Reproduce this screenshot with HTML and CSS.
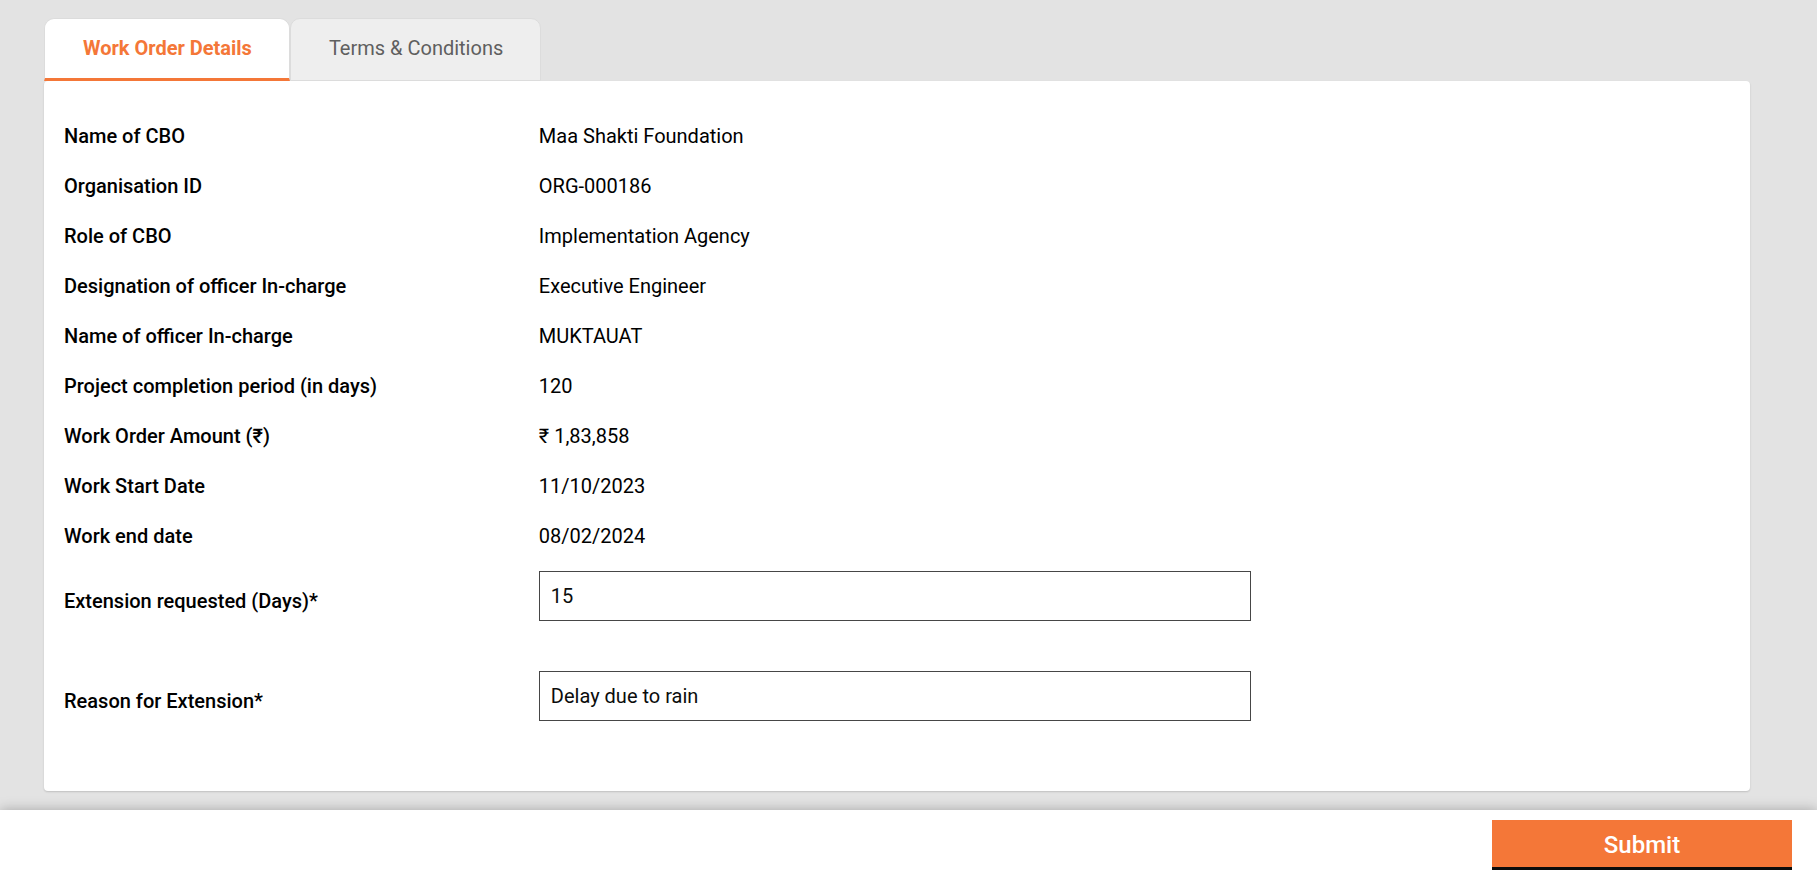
FILE: index.html
```html
<!DOCTYPE html>
<html lang="en">
<head>
<meta charset="utf-8">
<title>Work Order</title>
<link rel="stylesheet" href="styles.css">
</head>
<body>
<form class="page">
  <main class="content">
    <div class="tabs" role="tablist">
      <button type="button" class="tab tab-active" role="tab" aria-selected="true">Work Order Details</button>
      <button type="button" class="tab" role="tab" aria-selected="false">Terms &amp; Conditions</button>
    </div>
    <section class="card">
      <dl class="details">
        <div class="row"><dt>Name of CBO</dt><dd>Maa Shakti Foundation</dd></div>
        <div class="row"><dt>Organisation ID</dt><dd>ORG-000186</dd></div>
        <div class="row"><dt>Role of CBO</dt><dd>Implementation Agency</dd></div>
        <div class="row"><dt>Designation of officer In-charge</dt><dd>Executive Engineer</dd></div>
        <div class="row"><dt>Name of officer In-charge</dt><dd>MUKTAUAT</dd></div>
        <div class="row"><dt>Project completion period (in days)</dt><dd>120</dd></div>
        <div class="row"><dt>Work Order Amount (₹)</dt><dd>₹ 1,83,858</dd></div>
        <div class="row"><dt>Work Start Date</dt><dd>11/10/2023</dd></div>
        <div class="row"><dt>Work end date</dt><dd>08/02/2024</dd></div>
      </dl>
      <div class="field">
        <label for="days">Extension requested (Days)*</label>
        <input id="days" type="text" value="15">
      </div>
      <div class="field">
        <label for="reason">Reason for Extension*</label>
        <input id="reason" type="text" value="Delay due to rain">
      </div>
    </section>
  </main>
  <footer class="action-bar">
    <button type="submit" class="submit">Submit</button>
  </footer>
</form>
</body>
</html>
```
FILE: styles.css
```css
* {
  box-sizing: border-box;
}

body {
  margin: 0;
  background: #e3e3e3;
  color: #000;
  font-family: Roboto, "Noto Sans", sans-serif;
  font-size: 20px;
  line-height: 24px;
}

button,
input {
  font: inherit;
  border-radius: 0;
}

.page {
  display: flex;
  flex-direction: column;
  min-height: 100vh;
}

.content {
  padding: 18px 67px 19px 44px;
}

.tabs {
  display: flex;
}

.tab {
  height: 63px;
  padding: 0 37px 4px 38px;
  border: 1px solid #dcdcdc;
  border-radius: 10px 10px 0 0;
  background: #eee;
  color: #5f5f5f;
}

.tab-active {
  padding-bottom: 2px;
  border-bottom: 3px solid #f47738;
  background: #fff;
  color: #f47738;
  font-weight: 700;
}

.card {
  padding: 30px 24px 20px 20px;
  border-radius: 4px;
  background: #fff;
  box-shadow: 0 1px 2px rgba(0, 0, 0, 0.16);
}

.details {
  margin: 0 0 10px;
}

.row,
.field {
  display: grid;
  grid-template-columns: 2fr 3fr 2fr;
  align-items: start;
}

.row {
  line-height: 50px;
}

dt,
label {
  font-weight: 500;
}

dd {
  margin: 0;
}

.field {
  min-height: 100px;
}

label {
  line-height: 60px;
}

input {
  width: 100%;
  height: 50px;
  padding: 0 11px;
  border: 1px solid #464646;
  background: #fff;
  color: #0b0c0c;
}

.action-bar {
  display: flex;
  justify-content: flex-end;
  margin-top: auto;
  padding: 10px 25px 6px;
  background: #fff;
  box-shadow: 0 0 12px rgba(0, 0, 0, 0.28);
}

.submit {
  width: 300px;
  height: 50px;
  padding: 0;
  border: 0;
  background: #f47738;
  box-shadow: inset 0 -3px 0 #0b0c0c;
  color: #fff;
  font-size: 24px;
  font-weight: 500;
}
```
